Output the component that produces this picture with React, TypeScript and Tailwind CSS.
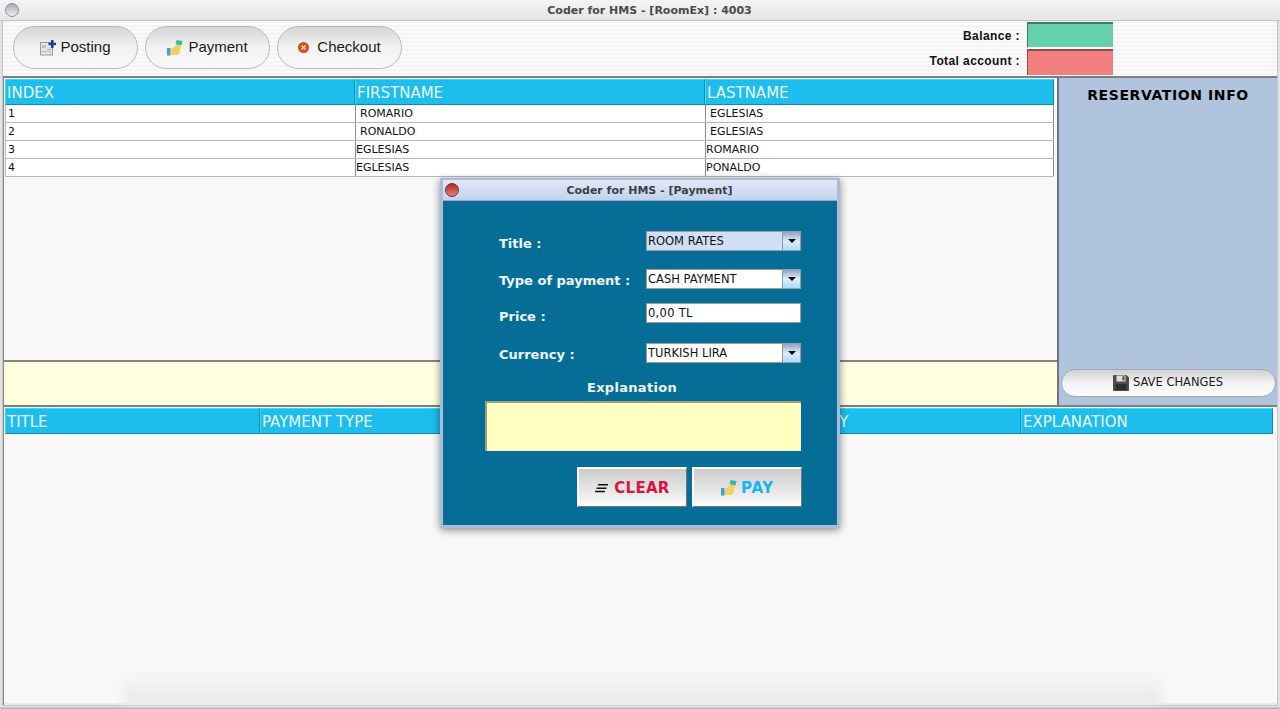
const dejavu = "font-['DejaVu_Sans',sans-serif]";
const arial = "font-['Liberation_Sans',Arial,sans-serif]";

const ROWS = [
  { index: '1', first: 'ROMARIO', last: 'EGLESIAS', pad: true },
  { index: '2', first: 'RONALDO', last: 'EGLESIAS', pad: true },
  { index: '3', first: 'EGLESIAS', last: 'ROMARIO', pad: false },
  { index: '4', first: 'EGLESIAS', last: 'PONALDO', pad: false },
];

const BOTTOM_COLS = [
  { label: 'TITLE', width: 'w-[255px]' },
  { label: 'PAYMENT TYPE', width: 'w-[254px]' },
  { label: 'PRICE', width: 'w-[250px]' },
  { label: 'CURRENCY', width: 'w-[257px]' },
  { label: 'EXPLANATION', width: 'w-[252px]' },
];

function HandIcon({ size = 16 }: { size?: number }) {
  return (
    <svg width={size} height={size} viewBox="0 0 16 16" className="shrink-0">
      <rect x="0" y="8" width="3.5" height="7.5" fill="#3b9fdc" />
      <path d="M4 8.5 L8 6.5 L9 4.5 L14 6 L12.5 13 Q12 15 10 15 L4 15 Z" fill="#f7cf5f" />
      <path d="M8.5 2 L10 0 L15.5 1 L14.5 5.5 L9.5 4.5 Z" fill="#3dbb9c" />
    </svg>
  );
}

function PostingIcon() {
  return (
    <svg width="16" height="16" viewBox="0 0 16 16" className="shrink-0">
      <rect x="0.5" y="2.5" width="12" height="12.5" fill="#e4e4e4" stroke="#9a9a9a" />
      <rect x="2" y="5" width="4" height="3" fill="#b8c4d2" />
      <rect x="7" y="9" width="4" height="1" fill="#9fb4cc" />
      <rect x="2" y="11" width="9" height="1" fill="#b4bcc8" />
      <rect x="11" y="0" width="2.5" height="8" fill="#12409c" />
      <rect x="8.5" y="2.7" width="7.5" height="2.5" fill="#12409c" />
    </svg>
  );
}

function CheckoutIcon() {
  return (
    <svg width="11" height="11" viewBox="0 0 11 11" className="shrink-0">
      <circle cx="5.5" cy="5.5" r="5.5" fill="#d2501a" />
      <path d="M3.5 3.5 L7.5 7.5 M7.5 3.5 L3.5 7.5" stroke="#fbe6dc" strokeWidth="1.4" />
    </svg>
  );
}

function ClearIcon() {
  return (
    <svg width="13" height="9" viewBox="0 0 13 9" className="shrink-0">
      <path d="M3 0.8 H13 M1.5 4.2 H11.5 M0 7.6 H10" stroke="#111" strokeWidth="1.5" />
    </svg>
  );
}

function FloppyIcon() {
  return (
    <svg width="16" height="16" viewBox="0 0 16 16" className="shrink-0">
      <path d="M0 1 Q0 0 1 0 H13.5 L16 2.5 V15 Q16 16 15 16 H1 Q0 16 0 15 Z" fill="#4c4c4c" />
      <rect x="3.5" y="0.5" width="9" height="6" fill="#dcdcdc" />
      <rect x="9.5" y="1.2" width="2" height="4.2" fill="#4c4c4c" />
      <rect x="2.5" y="9" width="11" height="6" fill="#2e2e2e" />
    </svg>
  );
}

function ToolButton({ icon, label, width }: { icon: React.ReactNode; label: string; width: string }) {
  return (
    <button className={`${width} h-[43px] rounded-[22px] border border-[#b9b9b9] bg-gradient-to-b from-[#d6d6d6] via-[#f2f2f2] to-[#f8f8f8] flex items-center justify-center gap-[4px] text-[15px] text-[#1a1a1a] ${arial}`}>
      {icon}
      <span>{label}</span>
    </button>
  );
}

function HeaderCell({ label, className }: { label: string; className: string }) {
  return (
    <div className={`${className} h-[26px] bg-[#1dbdee] border border-t-[#27e6f2] border-l-[#27e6f2] border-r-[#0e8aa8] border-b-[#0e8aa8] pl-[1px] pt-[2px] flex items-center text-[15px] text-[#e9fbff] ${dejavu}`}>
      {label}
    </div>
  );
}

function ComboBox({ value, selected }: { value: string; selected?: boolean }) {
  return (
    <div className={`w-[155px] h-[20px] flex border border-[#9b9b9b] ${selected ? 'bg-[#d0dff3]' : 'bg-white'}`}>
      <span className={`flex-1 pl-[1px] text-[11.5px] leading-[19px] text-[#111] ${dejavu}`}>{value}</span>
      <span className="w-[18px] border-l border-[#8c98a6] bg-gradient-to-b from-[#8fa6c2] via-[#e0effc] to-[#a9dcfb] flex items-center justify-center">
        <span className="w-0 h-0 border-l-[4px] border-r-[4px] border-t-[4px] border-l-transparent border-r-transparent border-t-black" />
      </span>
    </div>
  );
}

function FormRow({ label, className, labelClass, children }: { label: string; className: string; labelClass: string; children: React.ReactNode }) {
  return (
    <div className={`flex items-center h-[20px] ${className}`}>
      <span className={`w-[147px] text-[13px] font-bold text-[#eef6fa] ${labelClass} ${dejavu}`}>{label}</span>
      {children}
    </div>
  );
}

export default function App() {
  return (
    <div className="relative w-[1280px] h-[709px] overflow-hidden bg-[#e2e2e2] flex flex-col">
      {/* window title */}
      <header className="relative h-[21px] shrink-0 bg-gradient-to-b from-[#f4f4f4] to-[#e6e6e6] border-b border-[#c4c4c4] flex items-center justify-center pl-[19px] pt-[2px]">
        <span className="absolute left-[5px] top-[3px] w-[14px] h-[14px] rounded-full border border-[#8a8f95] bg-gradient-to-b from-[#a9aeb4] to-[#eef1f4]" />
        <span className={`text-[11px] font-bold text-[#4a4a4a] ${dejavu}`}>Coder for HMS - [RoomEx] : 4003</span>
      </header>

      <div className="flex-1 flex flex-col mx-[2px] border border-t-0 border-[#c8c8c8] bg-[#f8f8f8]">
        {/* toolbar */}
        <div className="h-[55px] shrink-0 flex justify-between bg-[repeating-linear-gradient(to_bottom,#f4f4f4_0px,#f4f4f4_2px,#fbfbfb_2px,#fbfbfb_4px)]">
          <div className="flex gap-[7px] pl-[10px] pt-[5px]">
            <ToolButton icon={<PostingIcon />} label="Posting" width="w-[125px]" />
            <ToolButton icon={<span className="mr-[1px]"><HandIcon /></span>} label="Payment" width="w-[125px]" />
            <ToolButton icon={<span className="mr-[4px] flex"><CheckoutIcon /></span>} label="Checkout" width="w-[125px]" />
          </div>
          <div className={`w-[212px] mr-[164px] pt-[1px] flex flex-col gap-[1px] text-[12px] font-bold text-[#111] tracking-[0.4px] ${arial}`}>
            <div className="flex items-center h-[26px]">
              <span className="w-[119px] text-right whitespace-nowrap pt-[1px]">Balance :</span>
              <span className="ml-[7px] w-[86px] h-[26px] bg-[#66cfab] border-t-2 border-l border-t-[#3f7a66] border-l-[#3f7a66] border-b border-b-white" />
            </div>
            <div className="flex items-center h-[26px]">
              <span className="w-[119px] text-right whitespace-nowrap pb-[3px]">Total account :</span>
              <span className="ml-[7px] w-[86px] h-[26px] bg-[#f38080] border-t-2 border-l border-t-[#8f4e4e] border-l-[#8f4e4e]" />
            </div>
          </div>
        </div>

        {/* upper split */}
        <div className="h-[329px] shrink-0 flex border-t-2 border-[#7d7d85]">
          <div className="w-[1054px] flex flex-col border-l border-[#8a8a8a]">
            <div className="flex-1 pt-[1px] pl-[1px] bg-[#f8f8f8] border-b-2 border-[#85857a]">
              <div className="flex">
                <HeaderCell label="INDEX" className="w-[350px]" />
                <HeaderCell label="FIRSTNAME" className="w-[350px]" />
                <HeaderCell label="LASTNAME" className="w-[349px]" />
              </div>
              {ROWS.map((row) => (
                <div key={row.index} className={`flex w-[1049px] h-[18px] bg-white border-b border-[#b8b8b8] text-[11px] leading-[17px] text-[#111] ${dejavu}`}>
                  <span className="w-[350px] pl-[2px] border-l border-[#b8b8b8]">{row.index}</span>
                  <span className={`w-[350px] border-l border-[#8c8c8c] ${row.pad ? 'pl-[4px]' : 'pl-0'}`}>{row.first}</span>
                  <span className={`w-[349px] border-x border-[#8c8c8c] ${row.pad ? 'pl-[4px]' : 'pl-0'}`}>{row.last}</span>
                </div>
              ))}
            </div>
            <div className="h-[43px] shrink-0 bg-[#ffffe0]" />
          </div>
          <aside className="flex-1 bg-[#b0c4de] border-l-2 border-[#6f7480] flex flex-col items-center justify-between pb-[8px]">
            <h2 className={`mt-[7px] text-[14px] font-bold tracking-[0.6px] text-black ${dejavu}`}>RESERVATION INFO</h2>
            <button className={`w-[215px] h-[28px] rounded-[14px] border border-[#a0a8b4] bg-gradient-to-b from-[#d0d0d0] via-[#f4f4f4] to-[#fbfbfb] flex items-center justify-center gap-[4px] text-[11.5px] text-[#1a1a1a] ${dejavu}`}>
              <FloppyIcon />
              SAVE CHANGES
            </button>
          </aside>
        </div>

        {/* lower table */}
        <div className="relative flex-1 border-t-2 border-[#7d7d85] border-l border-l-[#8a8a8a] pl-[1px] pt-[1px] bg-[#f8f8f8]">
          <div className="flex w-[1268px]">
            {BOTTOM_COLS.map((col) => (
              <HeaderCell key={col.label} label={col.label} className={col.width} />
            ))}
          </div>
          <div className="absolute left-[120px] right-[115px] bottom-0 h-[32px] bg-gradient-to-b from-transparent to-[#e6e6e6] blur-[5px]" />
          <div className="absolute left-0 right-0 bottom-0 h-[2px] bg-[#e8e8f6]" />
        </div>
      </div>
      <div className="h-[3px] shrink-0 bg-gradient-to-b from-[#eeeeee] to-[#a6a6a6]" />

      {/* payment dialog */}
      <div className="absolute left-[440px] top-[178px] w-[400px] h-[350px] flex flex-col border-[3px] border-t-2 border-[#a9bdd8] shadow-[0_2px_8px_rgba(0,0,0,0.45)]">
        <div className="relative h-[21px] shrink-0 bg-gradient-to-b from-[#e3e9f8] to-[#c4d1ec] border-b border-[#98a8c0] flex items-center justify-center pl-[19px] pt-[2px]">
          <span className="absolute left-[2px] top-[3px] w-[14px] h-[14px] rounded-full border border-[#7a2a2a] bg-gradient-to-b from-[#a82a24] to-[#e98078]" />
          <span className={`text-[11px] font-bold text-[#3a3f4a] ${dejavu}`}>Coder for HMS - [Payment]</span>
        </div>
        <div className="flex-1 bg-[#066e96] pl-[56px] pt-[30px] relative">
          <FormRow label="Title :" className="" labelClass="pt-[6px]">
            <ComboBox value="ROOM RATES" selected />
          </FormRow>
          <FormRow label="Type of payment :" className="mt-[18px]" labelClass="pt-[4px]">
            <ComboBox value="CASH PAYMENT" />
          </FormRow>
          <FormRow label="Price :" className="mt-[14px]" labelClass="pt-[8px]">
            <div className={`w-[155px] h-[20px] bg-white border border-[#9b9b9b] pl-[1px] text-[11.5px] tracking-[0.3px] leading-[19px] text-[#111] ${dejavu}`}>0,00 TL</div>
          </FormRow>
          <FormRow label="Currency :" className="mt-[20px]" labelClass="pt-[4px]">
            <ComboBox value="TURKISH LIRA" />
          </FormRow>
          <div className={`mt-[15px] w-[266px] text-center text-[13px] font-bold text-[#eef6fa] ${dejavu} tracking-[0.3px]`}>Explanation</div>
          <div className="mt-[3px] ml-[-14px] w-[316px] h-[50px] bg-[#ffffc0] border-t-2 border-l-2 border-t-[#a09f80] border-l-[#a09f80]" />
          <div className="mt-[16px] ml-[78px] flex gap-[5px]">
            <button className={`w-[110px] h-[40px] pt-[2px] bg-gradient-to-b from-[#cccccc] to-[#fbfbfb] border-t-2 border-l-2 border-t-white border-l-white border-r border-b border-r-[#777] border-b-[#777] flex items-center justify-center gap-[6px] text-[15px] tracking-[0.3px] font-bold text-[#dc143c] ${dejavu}`}>
              <ClearIcon />
              CLEAR
            </button>
            <button className={`w-[110px] h-[40px] pt-[2px] bg-gradient-to-b from-[#cccccc] to-[#fbfbfb] border-t-2 border-l-2 border-t-white border-l-white border-r border-b border-r-[#777] border-b-[#777] flex items-center justify-center gap-[4px] text-[15px] tracking-[0.8px] font-bold text-[#12b6f5] ${dejavu}`}>
              <HandIcon />
              PAY
            </button>
          </div>
        </div>
      </div>
    </div>
  );
}
